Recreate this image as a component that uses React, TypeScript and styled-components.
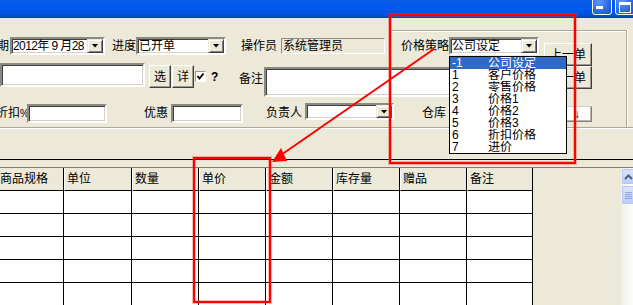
import React from "react";
import styled, { createGlobalStyle } from "styled-components";

const GlobalStyle = createGlobalStyle`
  html, body {
    margin: 0;
    padding: 0;
    background: #ece9d8;
  }
  body {
    overflow: hidden;
    font-family: "Liberation Sans", "Noto Sans CJK SC", sans-serif;
    font-size: 12px;
    color: #000;
  }
  * {
    box-sizing: border-box;
  }
`;

const priceOptions = [
  { code: "-1", name: "公司设定" },
  { code: "1", name: "客户价格" },
  { code: "2", name: "零售价格" },
  { code: "3", name: "价格1" },
  { code: "4", name: "价格2" },
  { code: "5", name: "价格3" },
  { code: "6", name: "折扣价格" },
  { code: "7", name: "进价" },
];

const columns = ["商品规格", "单位", "数量", "单价", "金额", "库存量", "赠品", "备注"];

const App = () => {
  return (
    <Window>
      <GlobalStyle />
      <TitleBar>
        <CapButton>
          <svg width="18" height="17" viewBox="0 0 18 17">
            <rect x="3" y="9" width="7" height="3" fill="#fff" />
          </svg>
        </CapButton>
        <CapButton>
          <svg width="18" height="17" viewBox="0 0 18 17">
            <rect x="3.5" y="5.5" width="11" height="10" fill="none" stroke="#fff" />
            <rect x="3" y="5" width="12" height="3" fill="#fff" />
          </svg>
        </CapButton>
      </TitleBar>

      <Form>
        <TopBlock>
          <LeftStack>
            <Row $h={19} $align="center">
              <Label $ml={-3}>期</Label>
              <Field $w={95} $h={18} $ml={1}>
                <FieldText $tight>2012年 9 月28</FieldText>
                <DropBtn />
              </Field>
              <Label $ml={7}>进度</Label>
              <Field $w={90} $h={18}>
                <FieldText>已开单</FieldText>
                <DropBtn />
              </Field>
              <Label $ml={15}>操作员</Label>
              <Field $w={104} $h={16} $ml={4} $readOnly>
                <FieldText>系统管理员</FieldText>
              </Field>
              <Label $ml={16}>价格策略</Label>
              <Field $w={90} $h={18}>
                <FieldText>公司设定</FieldText>
                <DropBtn />
              </Field>
            </Row>

            <Row $h={34} $mt={8}>
              <Field $w={145} $h={24} />
              <Btn $w={22} $h={23} $ml={4} $mt={2}>选</Btn>
              <Btn $w={22} $h={23} $ml={1} $mt={2}>详</Btn>
              <Check $ml={1} $mt={8}>
                <svg width="9" height="9" viewBox="0 0 9 9">
                  <path d="M1.5 4 L3.5 6.5 L7.5 1.5" fill="none" stroke="#000" strokeWidth="2" />
                </svg>
              </Check>
              <Hint>?</Hint>
              <Label $ml={20} $mt={9}>备注</Label>
              <Field $w={280} $h={30} $ml={1} $mt={4} />
            </Row>
          </LeftStack>

          <ButtonStack>
            <Btn $w={48} $h={23}>上一单</Btn>
            <Btn $w={48} $h={23}>下一单</Btn>
          </ButtonStack>
        </TopBlock>

        <Row $h={20} $mt={6}>
          <Label $ml={-4} $mt={3} $w={31}>
            折扣<Pct>%</Pct>
          </Label>
          <Field $w={80} $h={19} $mt={1} />
          <Label $ml={37} $mt={3}>优惠</Label>
          <Field $w={72} $h={19} $ml={3} $mt={1} />
          <Label $ml={23} $mt={3}>负责人</Label>
          <Field $w={89} $h={17} $ml={3}>
            <DropBtn />
          </Field>
          <Label $ml={28} $mt={3}>仓库</Label>
          <StoreBox>↓</StoreBox>
        </Row>

        <Separator />
      </Form>

      <GridArea>
        <GridStrip />
        <GridBody>
          <Table>
            {columns.map((c, i) => (
              <HeadCell key={c} $first={i === 0}>
                {c}
              </HeadCell>
            ))}
            {Array.from({ length: 5 * columns.length }).map((_, i) => (
              <Cell key={i} />
            ))}
          </Table>
          <GridBlank />
          <ScrollBar>
            <ScrollBtn>
              <svg width="9" height="6" viewBox="0 0 9 6">
                <path d="M1 5 L4.5 1.5 L8 5" fill="none" stroke="#4d6185" strokeWidth="2" />
              </svg>
            </ScrollBtn>
            <ScrollThumb>
              <svg width="7" height="8" viewBox="0 0 7 8">
                <path d="M0 1.5 H7 M0 3.5 H7 M0 5.5 H7 M0 7.5 H7" stroke="#8fa6e6" strokeWidth="1" />
              </svg>
            </ScrollThumb>
          </ScrollBar>
        </GridBody>
      </GridArea>

      <GroupFrame />

      <DropList>
        {priceOptions.map((o, i) => (
          <DropItem key={o.code} $sel={i === 0}>
            <ItemCode>{o.code}</ItemCode>
            <ItemName>{o.name}</ItemName>
          </DropItem>
        ))}
      </DropList>

      <Callout $x={389} $y={14} $w={187} $h={150} />
      <Callout $x={193} $y={157} $w={78} $h={146} />
      <ArrowLayer width="633" height="305" viewBox="0 0 633 305">
        <line x1="434" y1="49" x2="281" y2="155" stroke="#f00" strokeWidth="2" />
        <polygon points="272,162 287,161 281,148" fill="#f00" />
      </ArrowLayer>
    </Window>
  );
};

export default App;

const Window = styled.div`
  position: relative;
  width: 633px;
  height: 305px;
  overflow: hidden;
  background: #ece9d8;
  display: flex;
  flex-direction: column;
`;

const TitleBar = styled.div`
  height: 18px;
  width: 635px;
  flex-shrink: 0;
  overflow: hidden;
  background: linear-gradient(180deg, #0a5ae6 0%, #0058ee 45%, #0453dc 80%, #0040b8 100%);
  display: flex;
  justify-content: flex-end;
  align-items: flex-end;
  gap: 3px;
  padding-bottom: 3px;
`;

const CapButton = styled.div`
  width: 20px;
  height: 19px;
  border: 1px solid #fff;
  border-radius: 3px;
  background: radial-gradient(circle at 35% 30%, #5c98f8 0%, #2a67e4 60%, #1c50d2 100%);
  display: flex;
  align-items: flex-end;
`;

const Form = styled.div`
  display: flex;
  flex-direction: column;
  flex-shrink: 0;
`;

const TopBlock = styled.div`
  display: flex;
`;

const LeftStack = styled.div`
  width: 544px;
  padding-top: 18px;
  display: flex;
  flex-direction: column;
`;

const ButtonStack = styled.div`
  width: 48px;
  padding-top: 25px;
  display: flex;
  flex-direction: column;
`;

const Row = styled.div<{ $h: number; $mt?: number; $align?: string }>`
  display: flex;
  height: ${(p) => p.$h}px;
  margin-top: ${(p) => p.$mt ?? 0}px;
  align-items: ${(p) => p.$align ?? "flex-start"};
  flex-shrink: 0;
`;

const Label = styled.span<{ $ml?: number; $mt?: number; $w?: number }>`
  flex-shrink: 0;
  margin-left: ${(p) => p.$ml ?? 0}px;
  margin-top: ${(p) => p.$mt ?? 0}px;
  width: ${(p) => (p.$w ? `${p.$w}px` : "auto")};
  line-height: 14px;
  white-space: nowrap;
`;

const Pct = styled.span`
  font-size: 10px;
`;

const Field = styled.div<{
  $w: number;
  $h: number;
  $ml?: number;
  $mt?: number;
  $readOnly?: boolean;
}>`
  flex-shrink: 0;
  width: ${(p) => p.$w}px;
  height: ${(p) => p.$h}px;
  margin-left: ${(p) => p.$ml ?? 0}px;
  margin-top: ${(p) => p.$mt ?? 0}px;
  background: ${(p) => (p.$readOnly ? "#ece9d8" : "#fff")};
  border: ${(p) => (p.$readOnly ? "1px" : "2px")} solid;
  border-color: #8c8a80 #fff #fff #8c8a80;
  box-shadow: ${(p) => (p.$readOnly ? "none" : "inset 1px 1px #404040, inset -1px -1px #d4d0c8")};
  display: flex;
  align-items: center;
  overflow: hidden;
  white-space: nowrap;
`;

const FieldText = styled.span<{ $tight?: boolean }>`
  padding-left: 1px;
  line-height: 14px;
  overflow: hidden;
  flex-shrink: 0;
  letter-spacing: ${(p) => (p.$tight ? "-0.6px" : "0")};
`;

const DropBtn = styled.span`
  margin-left: auto;
  width: 16px;
  height: 100%;
  flex-shrink: 0;
  background: #ece9d8;
  border: 1px solid;
  border-color: #ece9d8 #404040 #404040 #ece9d8;
  box-shadow: inset 1px 1px #fff, inset -1px -1px #808080;
  display: flex;
  align-items: center;
  justify-content: center;

  &::after {
    content: "";
    width: 7px;
    height: 4px;
    background: #000;
    clip-path: polygon(0 0, 100% 0, 50% 100%);
  }
`;

const Btn = styled.button<{ $w: number; $h: number; $ml?: number; $mt?: number }>`
  flex-shrink: 0;
  width: ${(p) => p.$w}px;
  height: ${(p) => p.$h}px;
  margin: ${(p) => p.$mt ?? 0}px 0 0 ${(p) => p.$ml ?? 0}px;
  padding: 0;
  font: inherit;
  color: #000;
  background: #ece9d8;
  border: 1px solid;
  border-color: #fff #404040 #404040 #fff;
  box-shadow: inset -1px -1px #9d9a8c;
  line-height: 14px;
`;

const Check = styled.span<{ $ml?: number; $mt?: number }>`
  flex-shrink: 0;
  width: 11px;
  height: 11px;
  margin-left: ${(p) => p.$ml ?? 0}px;
  margin-top: ${(p) => p.$mt ?? 0}px;
  background: #fff;
  border: 1px solid;
  border-color: #9a9890 #fff #fff #9a9890;
  display: flex;
  align-items: center;
  justify-content: center;
`;

const Hint = styled.span`
  flex-shrink: 0;
  width: 8px;
  margin: 7px 0 0 5px;
  font-weight: bold;
  line-height: 14px;
`;

const StoreBox = styled.div`
  flex-shrink: 0;
  width: 143px;
  height: 16px;
  margin: 3px 0 0 3px;
  background: #fff;
  border: 1px solid;
  border-color: #d4d0c8 #808080 #808080 #d4d0c8;
  box-shadow: inset -1px -1px #b8b5a8;
  padding-right: 11px;
  text-align: right;
  line-height: 14px;
`;

const Separator = styled.div`
  margin-top: 4px;
  height: 2px;
  border-top: 1px solid #aca899;
  border-bottom: 1px solid #fff;
`;

const GridArea = styled.div`
  margin-top: 30px;
  flex: 1;
  min-height: 0;
  border-top: 1px solid #000;
  display: flex;
  flex-direction: column;
`;

const GridStrip = styled.div`
  height: 8px;
  flex-shrink: 0;
  border-bottom: 1px solid #7f7d74;
`;

const GridBody = styled.div`
  flex: 1;
  min-height: 0;
  display: flex;
`;

const Table = styled.div`
  width: 533px;
  flex-shrink: 0;
  display: grid;
  grid-template-columns: 64px 68px repeat(5, 67px) 66px;
  grid-auto-rows: 23px;
  align-content: start;
`;

const HeadCell = styled.div<{ $first?: boolean }>`
  background: #ece9d8;
  border-right: 1px solid #000;
  border-bottom: 1px solid #000;
  border-left: ${(p) => (p.$first ? "none" : "1px solid #fff")};
  padding: 4px 0 0 ${(p) => (p.$first ? 0 : 2)}px;
  line-height: 14px;
  white-space: nowrap;
  overflow: hidden;
`;

const Cell = styled.div`
  background: #fff;
  border-right: 1px solid #000;
  border-bottom: 1px solid #000;
`;

const GridBlank = styled.div`
  flex: 1;
`;

const ScrollBar = styled.div`
  width: 12px;
  flex-shrink: 0;
  background: linear-gradient(90deg, #f1efe8, #fdfdfb);
  display: flex;
  flex-direction: column;
  gap: 2px;
  padding-top: 1px;
`;

const ScrollBtn = styled.div`
  height: 15px;
  margin-left: 1px;
  border: 1px solid #b6c8f5;
  border-right: none;
  border-radius: 2px 0 0 2px;
  background: linear-gradient(180deg, #dae4fc, #bccdf7);
  display: flex;
  align-items: center;
  justify-content: center;
`;

const ScrollThumb = styled(ScrollBtn)`
  height: 18px;
`;

const GroupFrame = styled.div`
  position: absolute;
  left: 392px;
  top: 30px;
  width: 235px;
  height: 97px;
  border-top: 1px solid #aca899;
  border-right: 1px solid #aca899;
  box-shadow: inset 0 1px #fff, 1px 0 #fff;
  pointer-events: none;
`;

const DropList = styled.ul`
  position: absolute;
  left: 449px;
  top: 56px;
  width: 118px;
  height: 98px;
  margin: 0;
  padding: 0;
  list-style: none;
  background: #fff;
  border: 1px solid #000;
  overflow: hidden;
`;

const DropItem = styled.li<{ $sel?: boolean }>`
  display: flex;
  align-items: center;
  height: 12px;
  padding-left: 2px;
  white-space: nowrap;
  overflow: hidden;
  background: ${(p) => (p.$sel ? "#316ac5" : "transparent")};
  color: ${(p) => (p.$sel ? "#fff" : "#000")};
`;

const ItemCode = styled.span`
  width: 36px;
  flex-shrink: 0;
  line-height: 12px;
`;

const ItemName = styled.span`
  line-height: 12px;
`;

const Callout = styled.div<{ $x: number; $y: number; $w: number; $h: number }>`
  position: absolute;
  left: ${(p) => p.$x}px;
  top: ${(p) => p.$y}px;
  width: ${(p) => p.$w}px;
  height: ${(p) => p.$h}px;
  border: 2px solid #f00;
  box-shadow: 0 0 0 1px rgba(255, 60, 60, 0.35), inset 0 0 0 1px rgba(255, 60, 60, 0.35);
  pointer-events: none;
`;

const ArrowLayer = styled.svg`
  position: absolute;
  left: 0;
  top: 0;
  pointer-events: none;
`;
